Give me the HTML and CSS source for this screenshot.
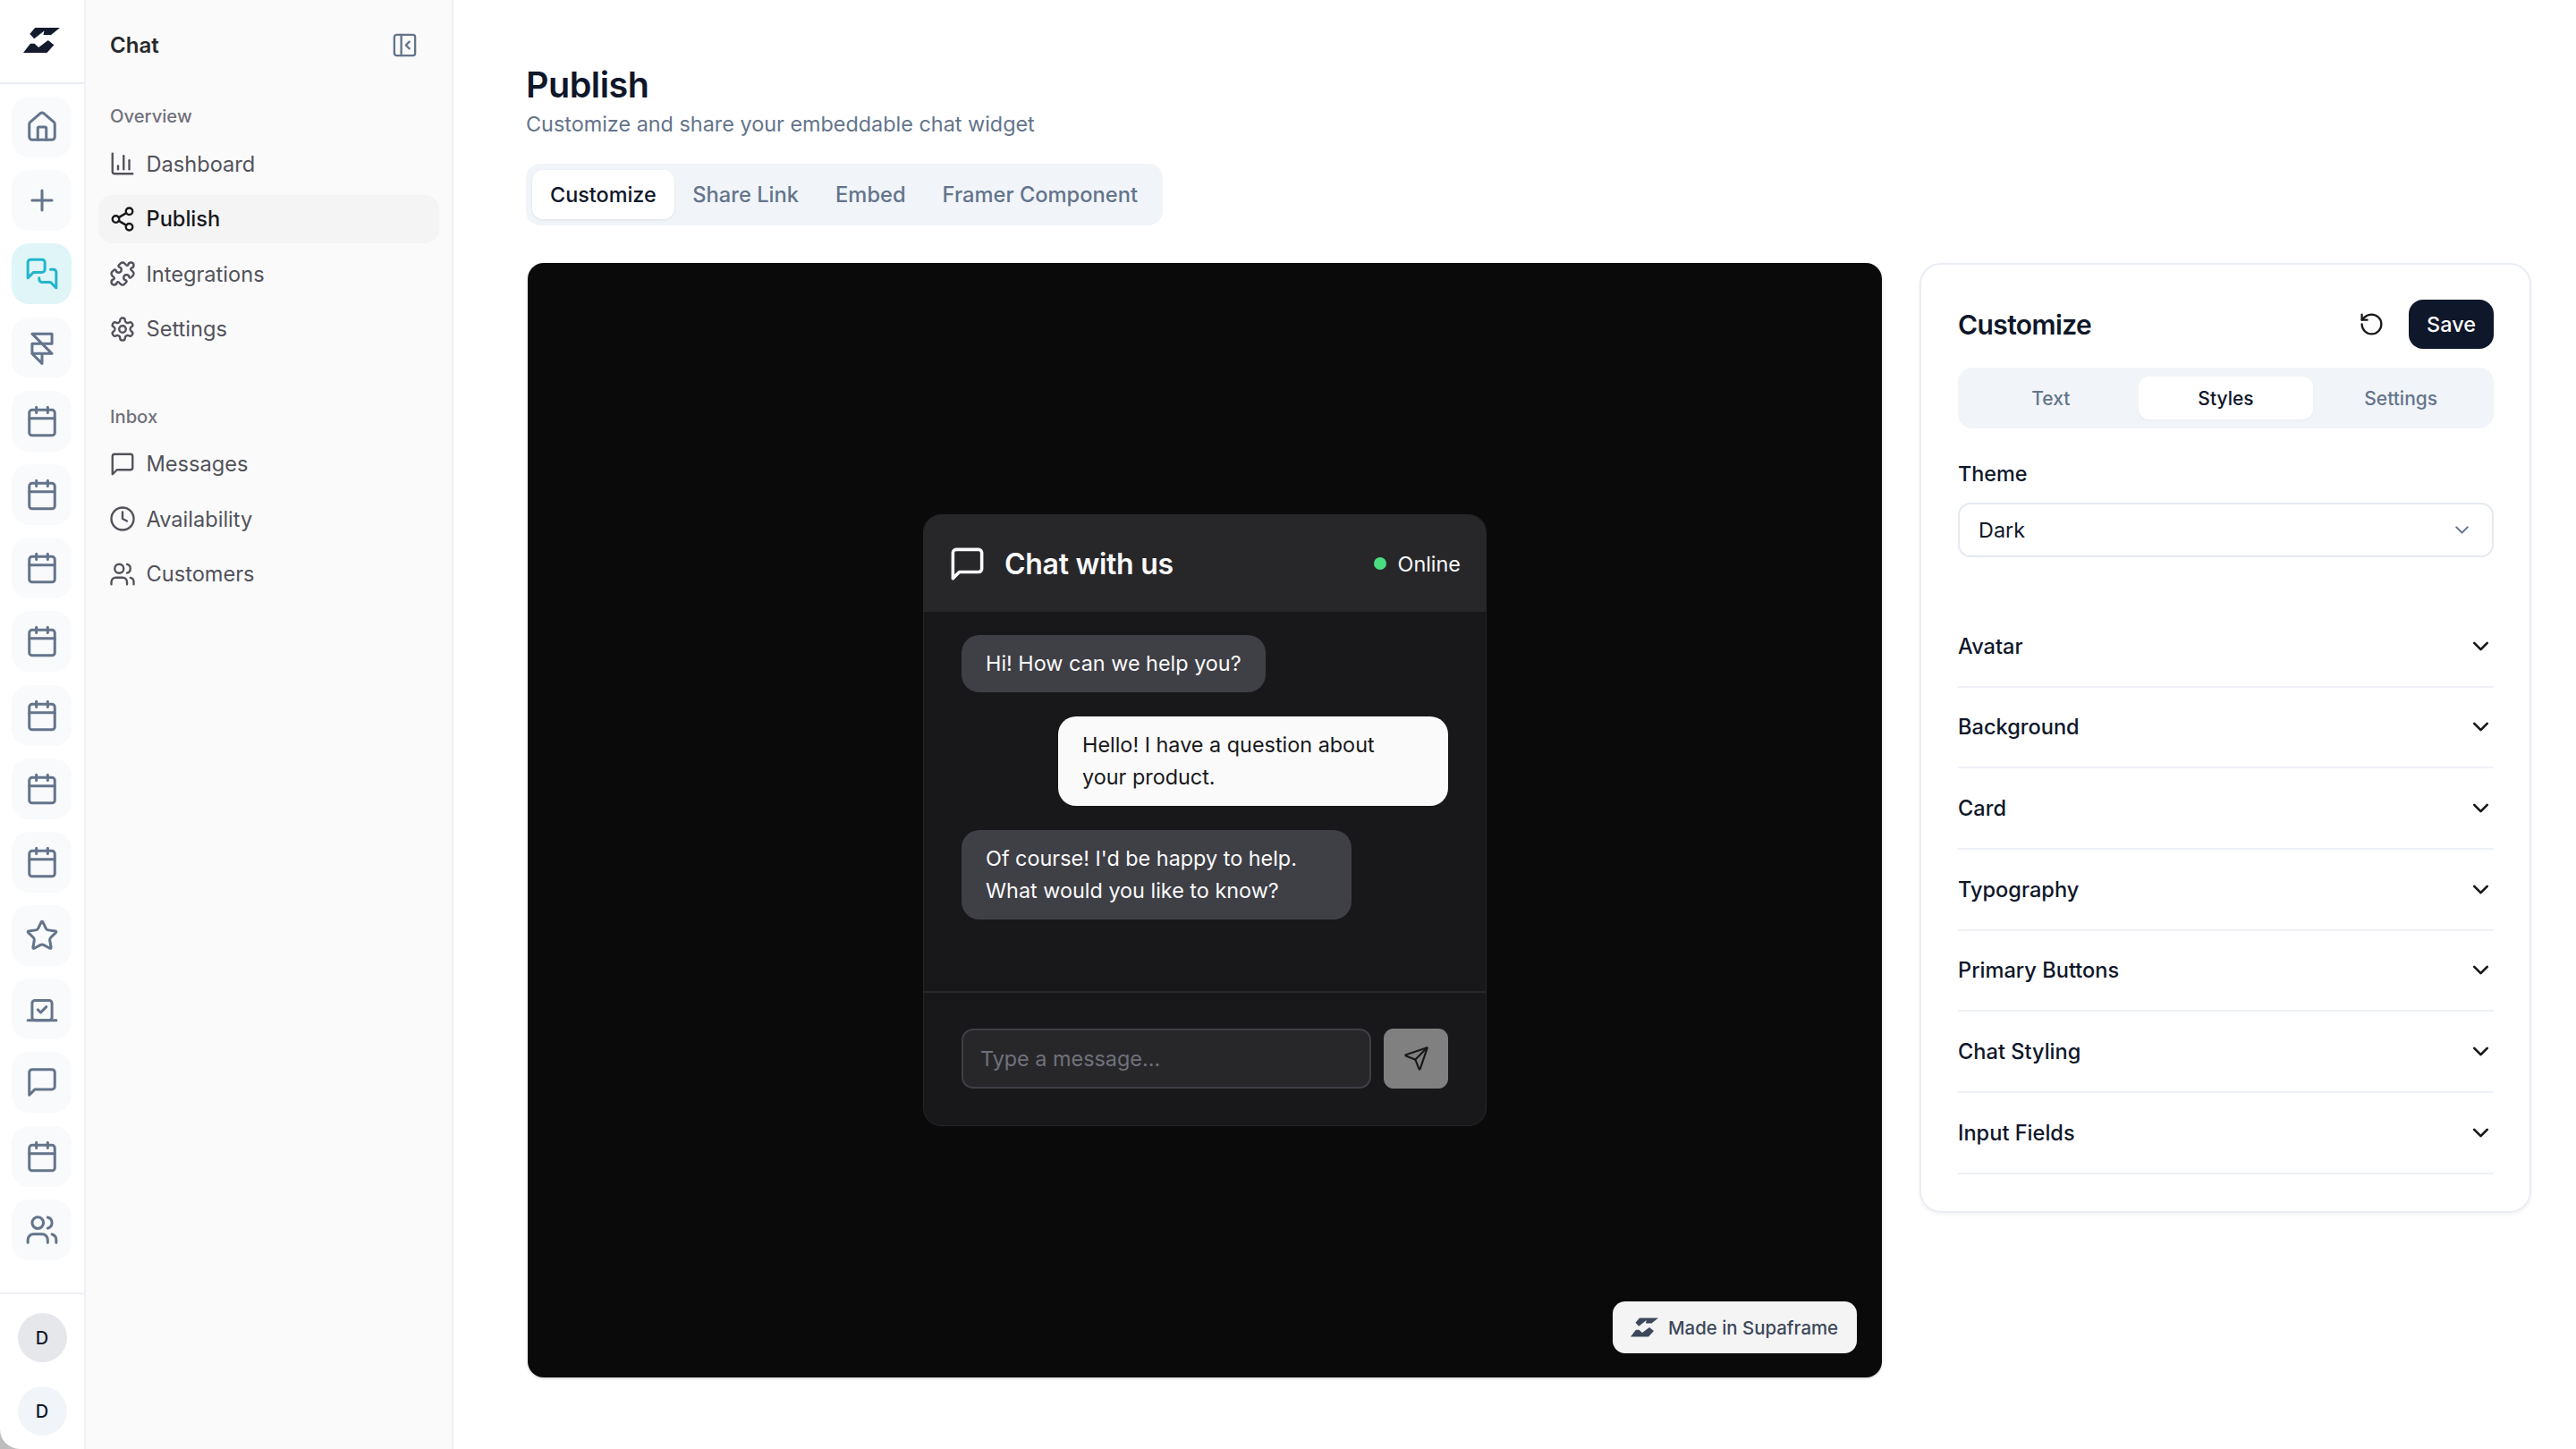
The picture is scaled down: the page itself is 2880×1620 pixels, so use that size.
FILE: index.html
```html
<!DOCTYPE html>
<html lang="en">
<head>
  <meta charset="UTF-8" />
  <title>Publish - Supaframe</title>
  <link rel="stylesheet" href="styles.css">
</head>
<body>
  <svg class="sprite" xmlns="http://www.w3.org/2000/svg">
    <symbol id="i-home" viewBox="0 0 24 24"><path d="M15 21v-8a1 1 0 0 0-1-1h-4a1 1 0 0 0-1 1v8"/><path d="M3 10a2 2 0 0 1 .709-1.528l7-5.999a2 2 0 0 1 2.582 0l7 5.999A2 2 0 0 1 21 10v9a2 2 0 0 1-2 2H5a2 2 0 0 1-2-2z"/></symbol>
    <symbol id="i-plus" viewBox="0 0 24 24"><path d="M5 12h14"/><path d="M12 5v14"/></symbol>
    <symbol id="i-messages" viewBox="0 0 24 24"><path d="M14 9a2 2 0 0 1-2 2H6l-4 4V4a2 2 0 0 1 2-2h8a2 2 0 0 1 2 2z"/><path d="M18 9h2a2 2 0 0 1 2 2v11l-4-4h-6a2 2 0 0 1-2-2v-1"/></symbol>
    <symbol id="i-framer" viewBox="0 0 24 24"><path d="M5 16V9h14V2H5l14 14h-7m-7 0 7 7v-7m-7 0h7"/></symbol>
    <symbol id="i-calendar" viewBox="0 0 24 24"><path d="M8 2v4"/><path d="M16 2v4"/><rect width="18" height="18" x="3" y="4" rx="2"/><path d="M3 10h18"/></symbol>
    <symbol id="i-star" viewBox="0 0 24 24"><path d="M11.525 2.295a.53.53 0 0 1 .95 0l2.31 4.679a2.123 2.123 0 0 0 1.595 1.16l5.166.756a.53.53 0 0 1 .294.904l-3.736 3.638a2.123 2.123 0 0 0-.611 1.878l.882 5.14a.53.53 0 0 1-.771.56l-4.618-2.428a2.122 2.122 0 0 0-1.973 0L6.396 21.01a.53.53 0 0 1-.77-.56l.881-5.139a2.122 2.122 0 0 0-.611-1.879L2.16 9.795a.53.53 0 0 1 .294-.906l5.165-.755a2.122 2.122 0 0 0 1.597-1.16z"/></symbol>
    <symbol id="i-laptop" viewBox="0 0 24 24"><path d="M2 20h20"/><path d="m9 12.5 2 2 4-4"/><rect x="5" y="6" width="14" height="14" rx="2"/></symbol>
    <symbol id="i-message" viewBox="0 0 24 24"><path d="M21 15a2 2 0 0 1-2 2H7l-4 4V5a2 2 0 0 1 2-2h14a2 2 0 0 1 2 2z"/></symbol>
    <symbol id="i-users" viewBox="0 0 24 24"><path d="M16 21v-2a4 4 0 0 0-4-4H6a4 4 0 0 0-4 4v2"/><circle cx="9" cy="7" r="4"/><path d="M22 21v-2a4 4 0 0 0-3-3.87"/><path d="M16 3.13a4 4 0 0 1 0 7.75"/></symbol>
    <symbol id="i-chart" viewBox="0 0 24 24"><path d="M3 3v16a2 2 0 0 0 2 2h16"/><path d="M18 17V9"/><path d="M13 17V5"/><path d="M8 17v-3"/></symbol>
    <symbol id="i-share" viewBox="0 0 24 24"><circle cx="18" cy="5" r="3"/><circle cx="6" cy="12" r="3"/><circle cx="18" cy="19" r="3"/><path d="m8.59 13.51 6.83 3.98"/><path d="m15.41 6.51-6.82 3.98"/></symbol>
    <symbol id="i-puzzle" viewBox="0 0 24 24"><path d="M15.39 4.39a1 1 0 0 0 1.68-.474 2.5 2.5 0 1 1 3.014 3.015 1 1 0 0 0-.474 1.68l1.683 1.682a2.414 2.414 0 0 1 0 3.414L19.61 15.39a1 1 0 0 1-1.68-.474 2.5 2.5 0 1 0-3.014 3.015 1 1 0 0 1 .474 1.68l-1.683 1.682a2.414 2.414 0 0 1-3.414 0L8.61 19.61a1 1 0 0 0-1.68.474 2.5 2.5 0 1 1-3.014-3.015 1 1 0 0 0 .474-1.68l-1.683-1.682a2.414 2.414 0 0 1 0-3.414L4.39 8.61a1 1 0 0 1 1.68.474 2.5 2.5 0 1 0 3.014-3.015 1 1 0 0 1-.474-1.68l1.683-1.682a2.414 2.414 0 0 1 3.414 0z"/></symbol>
    <symbol id="i-gear" viewBox="0 0 24 24"><path d="M12.22 2h-.44a2 2 0 0 0-2 2v.18a2 2 0 0 1-1 1.73l-.43.25a2 2 0 0 1-2 0l-.15-.08a2 2 0 0 0-2.73.73l-.22.38a2 2 0 0 0 .73 2.73l.15.1a2 2 0 0 1 1 1.72v.51a2 2 0 0 1-1 1.74l-.15.09a2 2 0 0 0-.73 2.73l.22.38a2 2 0 0 0 2.73.73l.15-.08a2 2 0 0 1 2 0l.43.25a2 2 0 0 1 1 1.73V20a2 2 0 0 0 2 2h.44a2 2 0 0 0 2-2v-.18a2 2 0 0 1 1-1.73l.43-.25a2 2 0 0 1 2 0l.15.08a2 2 0 0 0 2.73-.73l.22-.39a2 2 0 0 0-.73-2.73l-.15-.08a2 2 0 0 1-1-1.74v-.5a2 2 0 0 1 1-1.74l.15-.09a2 2 0 0 0 .73-2.73l-.22-.38a2 2 0 0 0-2.73-.73l-.15.08a2 2 0 0 1-2 0l-.43-.25a2 2 0 0 1-1-1.73V4a2 2 0 0 0-2-2z"/><circle cx="12" cy="12" r="3"/></symbol>
    <symbol id="i-clock" viewBox="0 0 24 24"><circle cx="12" cy="12" r="10"/><path d="M12 6v6l4 2"/></symbol>
    <symbol id="i-panel" viewBox="0 0 24 24"><rect width="18" height="18" x="3" y="3" rx="2"/><path d="M9 3v18"/><path d="m16 15-3-3 3-3"/></symbol>
    <symbol id="i-reset" viewBox="0 0 24 24"><path d="M3 12a9 9 0 1 0 9-9 9.75 9.75 0 0 0-6.74 2.74L3 8"/><path d="M3 3v5h5"/></symbol>
    <symbol id="i-send" viewBox="0 0 24 24"><path d="M14.536 21.686a.5.5 0 0 0 .937-.024l6.5-19a.496.496 0 0 0-.635-.635l-19 6.5a.5.5 0 0 0-.024.937l7.93 3.18a2 2 0 0 1 1.112 1.11z"/><path d="m21.854 2.147-10.94 10.939"/></symbol>
    <symbol id="i-chevron" viewBox="0 0 24 24"><path d="m6 9 6 6 6-6"/></symbol>
    <symbol id="i-logo" viewBox="48 64 124 84"><path class="solid" d="M88 64H172L142 88H116L119 74L85 101L70 85Z"/><path class="solid" d="M132 106L152 122L128 148H48L72 117H86L100 130Z"/></symbol>
  </svg>

  <div class="app">
    <aside class="rail">
      <div class="rail-logo"><svg class="logo"><use href="#i-logo"/></svg></div>
      <nav class="rail-nav">
        <a class="rail-btn"><svg class="icon"><use href="#i-home"/></svg></a>
        <a class="rail-btn"><svg class="icon"><use href="#i-plus"/></svg></a>
        <a class="rail-btn active"><svg class="icon"><use href="#i-messages"/></svg></a>
        <a class="rail-btn"><svg class="icon"><use href="#i-framer"/></svg></a>
        <a class="rail-btn"><svg class="icon"><use href="#i-calendar"/></svg></a>
        <a class="rail-btn"><svg class="icon"><use href="#i-calendar"/></svg></a>
        <a class="rail-btn"><svg class="icon"><use href="#i-calendar"/></svg></a>
        <a class="rail-btn"><svg class="icon"><use href="#i-calendar"/></svg></a>
        <a class="rail-btn"><svg class="icon"><use href="#i-calendar"/></svg></a>
        <a class="rail-btn"><svg class="icon"><use href="#i-calendar"/></svg></a>
        <a class="rail-btn"><svg class="icon"><use href="#i-calendar"/></svg></a>
        <a class="rail-btn"><svg class="icon"><use href="#i-star"/></svg></a>
        <a class="rail-btn"><svg class="icon"><use href="#i-laptop"/></svg></a>
        <a class="rail-btn"><svg class="icon"><use href="#i-message"/></svg></a>
        <a class="rail-btn"><svg class="icon"><use href="#i-calendar"/></svg></a>
        <a class="rail-btn"><svg class="icon"><use href="#i-users"/></svg></a>
      </nav>
      <div class="rail-foot">
        <div class="avatar grey">D</div>
        <div class="avatar">D</div>
      </div>
    </aside>

    <aside class="sidebar">
      <div class="sidebar-head">
        <span class="sidebar-title">Chat</span>
        <svg class="panel-toggle"><use href="#i-panel"/></svg>
      </div>
      <div class="group">
        <div class="group-label">Overview</div>
        <a class="side-link"><svg><use href="#i-chart"/></svg>Dashboard</a>
        <a class="side-link active"><svg><use href="#i-share"/></svg>Publish</a>
        <a class="side-link"><svg><use href="#i-puzzle"/></svg>Integrations</a>
        <a class="side-link"><svg><use href="#i-gear"/></svg>Settings</a>
      </div>
      <div class="group">
        <div class="group-label">Inbox</div>
        <a class="side-link"><svg><use href="#i-message"/></svg>Messages</a>
        <a class="side-link"><svg><use href="#i-clock"/></svg>Availability</a>
        <a class="side-link"><svg><use href="#i-users"/></svg>Customers</a>
      </div>
    </aside>

    <main class="main">
      <h1>Publish</h1>
      <p class="subtitle">Customize and share your embeddable chat widget</p>
      <div class="tabs">
        <a class="tab active">Customize</a>
        <a class="tab">Share Link</a>
        <a class="tab">Embed</a>
        <a class="tab">Framer Component</a>
      </div>

      <div class="content">
        <section class="preview">
          <div class="widget">
            <div class="widget-head">
              <svg class="widget-icon"><use href="#i-message"/></svg>
              <span class="widget-title">Chat with us</span>
              <span class="status"><i class="dot"></i>Online</span>
            </div>
            <div class="widget-body">
              <div class="bubble them">Hi! How can we help you?</div>
              <div class="bubble me">Hello! I have a question about your product.</div>
              <div class="bubble them">Of course! I'd be happy to help. What would you like to know?</div>
            </div>
            <div class="widget-foot">
              <div class="msg-input">Type a message...</div>
              <button class="send-btn"><svg><use href="#i-send"/></svg></button>
            </div>
          </div>
          <a class="made-in"><svg><use href="#i-logo"/></svg>Made in Supaframe</a>
        </section>

        <section class="panel">
          <div class="panel-head">
            <h2>Customize</h2>
            <svg class="reset"><use href="#i-reset"/></svg>
            <button class="save">Save</button>
          </div>
          <div class="seg">
            <a class="seg-item">Text</a>
            <a class="seg-item active">Styles</a>
            <a class="seg-item">Settings</a>
          </div>
          <label class="field-label">Theme</label>
          <div class="select">Dark<svg><use href="#i-chevron"/></svg></div>
          <div class="accordion">
            <div class="acc-row">Avatar<svg><use href="#i-chevron"/></svg></div>
            <div class="acc-row">Background<svg><use href="#i-chevron"/></svg></div>
            <div class="acc-row">Card<svg><use href="#i-chevron"/></svg></div>
            <div class="acc-row">Typography<svg><use href="#i-chevron"/></svg></div>
            <div class="acc-row">Primary Buttons<svg><use href="#i-chevron"/></svg></div>
            <div class="acc-row">Chat Styling<svg><use href="#i-chevron"/></svg></div>
            <div class="acc-row">Input Fields<svg><use href="#i-chevron"/></svg></div>
          </div>
        </section>
      </div>
    </main>
  </div>
</body>
</html>
```

FILE: styles.css
```css
* { box-sizing: border-box; }
html, body { height: 100%; }
body {
  margin: 0;
  background: #bdbdbd;
  font-family: Inter, "Liberation Sans", sans-serif;
  color: #0f172a;
}
a { display: block; }
h1, h2, p { margin: 0; }
button { border: none; font-family: inherit; padding: 0; }
svg {
  fill: none;
  stroke: currentColor;
  stroke-width: 2;
  stroke-linecap: round;
  stroke-linejoin: round;
  flex-shrink: 0;
}
.sprite { display: none; }
.solid { fill: currentColor; stroke: none; }

.app {
  display: flex;
  height: 1620px;
  background: #fff;
  border-bottom-left-radius: 22px;
  overflow: hidden;
}

/* icon rail */
.rail {
  width: 96px;
  border-right: 2px solid #eef1f6;
  display: flex;
  flex-direction: column;
}
.rail-logo {
  height: 94px;
  border-bottom: 2px solid #e9edf3;
  padding: 31px 0 0 26px;
}
.logo { display: block; width: 41px; height: 28px; color: #141b2d; }
.rail-nav {
  flex: 1;
  padding: 14px 0 0 13px;
  display: flex;
  flex-direction: column;
  gap: 14.2px;
}
.rail-btn {
  width: 67px;
  height: 68px;
  border-radius: 20px;
  background: #f8fafc;
  color: #64748b;
  display: flex;
  align-items: center;
  justify-content: center;
}
.rail-btn.active { background: #dff5f8; color: #22b5cc; }
.icon { width: 38px; height: 38px; stroke-width: 1.9; }
.rail-foot {
  height: 175px;
  border-top: 2px solid #eef1f6;
  padding-top: 21px;
  display: flex;
  flex-direction: column;
  align-items: center;
  gap: 27px;
}
.avatar {
  width: 55px;
  height: 55px;
  border-radius: 50%;
  background: #f1f5f9;
  display: flex;
  align-items: center;
  justify-content: center;
  font-size: 20px;
  font-weight: 500;
  color: #0f172a;
}
.avatar.grey { background: #e5e7eb; }

/* secondary sidebar */
.sidebar {
  width: 411px;
  background: #fafafa;
  border-right: 2px solid #eef1f6;
  padding: 0 14px;
}
.sidebar-head {
  height: 100px;
  margin-bottom: 15px;
  display: flex;
  align-items: center;
  justify-content: space-between;
  padding: 0 23px 0 13px;
}
.sidebar-title { font-size: 24px; font-weight: 600; color: #27272a; }
.panel-toggle { width: 31px; height: 31px; color: #64748b; stroke-width: 1.8; }
.group { margin-bottom: 56px; }
.group-label {
  font-size: 20.2px;
  font-weight: 500;
  color: #71717a;
  padding-left: 13px;
  height: 29px;
  line-height: 29px;
  margin-bottom: 12px;
}
.side-link {
  height: 54px;
  margin-bottom: 7.6px;
  border-radius: 16px;
  padding-left: 12px;
  display: flex;
  align-items: center;
  gap: 11.5px;
  font-size: 23.6px;
  color: #52525b;
}
.side-link svg { width: 30px; height: 30px; stroke-width: 1.9; }
.side-link.active { background: #f4f4f5; color: #18181b; font-weight: 500; }

/* main area */
.main { flex: 1; padding: 69px 50px 0 81px; }
h1 { font-size: 39.5px; line-height: 52px; font-weight: 600; letter-spacing: -0.5px; }
.subtitle { font-size: 23.4px; line-height: 36px; color: #64748b; }
.tabs {
  display: inline-flex;
  margin-top: 26px;
  padding: 7px;
  height: 69px;
  background: #f1f5f9;
  border-radius: 16px;
  vertical-align: top;
}
.tab {
  padding: 0 20.5px;
  display: flex;
  align-items: center;
  font-size: 23.7px;
  font-weight: 500;
  color: #64748b;
  border-radius: 12px;
}
.tab.active {
  padding: 0 20px;
  font-size: 23.4px;
  background: #fff;
  color: #0f172a;
  box-shadow: 0 1px 3px rgba(0,0,0,0.08);
}
.content { display: flex; gap: 42px; margin: 42px 0 0 2px; align-items: flex-start; }

/* preview */
.preview {
  position: relative;
  width: 1514px;
  height: 1246px;
  background: #0a0a0a;
  border-radius: 18px;
  box-shadow: 0 1px 3px rgba(0,0,0,0.2);
  display: flex;
  align-items: center;
  justify-content: center;
}
.widget {
  width: 630px;
  height: 684px;
  background: #18181b;
  border: 1px solid #27272a;
  border-radius: 20px;
  overflow: hidden;
  display: flex;
  flex-direction: column;
  color: #fafafa;
}
.widget-head {
  height: 108px;
  background: #27272a;
  display: flex;
  align-items: center;
  padding: 0 28px 0 27px;
}
.widget-icon { width: 43px; height: 43px; stroke-width: 2; margin-right: 20px; }
.widget-title { flex: 1; font-size: 32px; font-weight: 600; letter-spacing: -0.3px; }
.status { display: flex; align-items: center; gap: 13px; font-size: 23.4px; }
.dot { width: 14px; height: 14px; border-radius: 50%; background: #4ade80; }
.widget-body {
  height: 424px;
  padding: 26px 42px;
  display: flex;
  flex-direction: column;
  align-items: flex-start;
  gap: 27px;
}
.bubble {
  max-width: 436px;
  padding: 14px 27px;
  border-radius: 20px;
  font-size: 23.4px;
  line-height: 36px;
}
.bubble.them { background: #3f3f46; }
.bubble.me {
  background: #fafafa;
  color: #18181b;
  align-self: flex-end;
  width: 436px;
  padding-right: 40px;
}
.widget-foot {
  flex: 1;
  border-top: 2px solid #27272a;
  padding: 40px 42px 0;
  display: flex;
  gap: 14px;
}
.msg-input {
  flex: 1;
  height: 67px;
  background: #27272a;
  border: 2px solid #3f3f46;
  border-radius: 13px;
  padding-left: 19px;
  display: flex;
  align-items: center;
  font-size: 23.4px;
  color: #71717a;
}
.send-btn {
  width: 72px;
  height: 67px;
  background: #808080;
  border-radius: 11px;
  color: #18181b;
  display: flex;
  align-items: center;
  justify-content: center;
}
.send-btn svg { width: 29px; height: 29px; stroke-width: 1.8; }
.made-in {
  position: absolute;
  right: 28px;
  bottom: 27px;
  width: 273px;
  height: 58px;
  background: #f4f4f5;
  border-radius: 14px;
  display: flex;
  align-items: center;
  padding-left: 20px;
  gap: 11px;
  font-size: 20.4px;
  font-weight: 500;
  color: #3d4859;
}
.made-in svg { width: 31px; height: 22px; }

/* customize panel */
.panel {
  width: 684px;
  height: 1062px;
  border: 2px solid #e9edf3;
  border-radius: 24px;
  padding: 39px 40px 40px 41px;
  box-shadow: 0 2px 4px rgba(15,23,42,0.05);
}
.panel-head { display: flex; align-items: center; height: 55px; }
.panel-head h2 { flex: 1; font-size: 30px; font-weight: 600; letter-spacing: -0.6px; }
.reset { width: 29px; height: 29px; margin-right: 27px; color: #18181b; stroke-width: 1.9; }
.save {
  width: 95px;
  height: 55px;
  border-radius: 16px;
  background: #0f172a;
  color: #fff;
  font-size: 23.4px;
  font-weight: 500;
}
.seg {
  margin-top: 21px;
  height: 68px;
  background: #f1f5f9;
  border-radius: 16px;
  padding: 10px 6px;
  display: grid;
  grid-template-columns: repeat(3, 1fr);
}
.seg-item {
  display: flex;
  align-items: center;
  justify-content: center;
  border-radius: 12px;
  font-size: 21px;
  font-weight: 500;
  color: #64748b;
}
.seg-item.active { background: #fff; color: #0f172a; box-shadow: 0 1px 2px rgba(0,0,0,0.05); }
.field-label {
  display: block;
  margin-top: 33px;
  height: 36px;
  line-height: 36px;
  font-size: 23.4px;
  font-weight: 500;
}
.select {
  margin-top: 14px;
  height: 61px;
  border: 2px solid #e5e9f0;
  border-radius: 14px;
  padding: 0 21px;
  display: flex;
  align-items: center;
  justify-content: space-between;
  font-size: 23.4px;
}
.select svg { width: 25px; height: 25px; color: #64748b; stroke-width: 2; }
.accordion { margin-top: 55px; }
.acc-row {
  height: 90.67px;
  border-bottom: 2px solid #eef1f6;
  display: flex;
  align-items: center;
  justify-content: space-between;
  font-size: 23.6px;
  font-weight: 500;
}
.acc-row svg { width: 29px; height: 29px; stroke-width: 2.2; color: #18181b; }
```
